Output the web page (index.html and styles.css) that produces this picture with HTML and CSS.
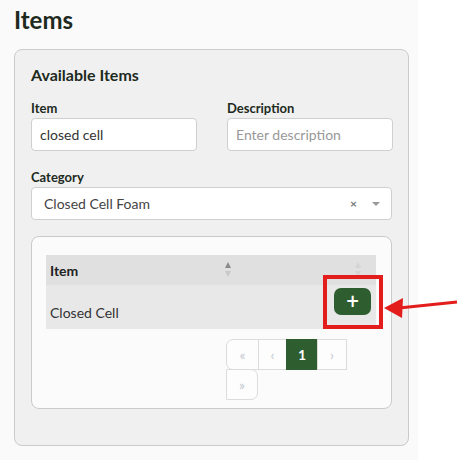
FILE: index.html
```html
<!DOCTYPE html>
<html lang="en">
<head>
<meta charset="utf-8">
<title>Items</title>
<link rel="stylesheet" href="styles.css">
</head>
<body>
<div class="page">
  <h1 class="page-title">Items</h1>

  <section class="card">
    <h2 class="card-title">Available Items</h2>

    <div class="form-row">
      <div class="field">
        <label class="label">Item</label>
        <input class="input" type="text" value="closed cell">
      </div>
      <div class="field">
        <label class="label">Description</label>
        <input class="input" type="text" placeholder="Enter description">
      </div>
    </div>

    <div class="field field-full">
      <label class="label">Category</label>
      <div class="select">
        <span class="select-value">Closed Cell Foam</span>
        <span class="select-clear">×</span>
        <span class="select-caret"></span>
      </div>
    </div>

    <div class="results">
      <table class="table">
        <thead>
          <tr>
            <th class="col-item">Item<span class="sort sort-asc"></span></th>
            <th class="col-action"><span class="sort"></span></th>
          </tr>
        </thead>
        <tbody>
          <tr>
            <td class="col-item">Closed Cell</td>
            <td class="col-action">
              <div class="highlight">
                <button class="btn-add" type="button">+</button>
              </div>
            </td>
          </tr>
        </tbody>
      </table>

      <nav class="pager">
        <span class="pg pg-first">«</span>
        <span class="pg pg-prev">‹</span>
        <span class="pg pg-current">1</span>
        <span class="pg pg-next">›</span>
        <span class="pg pg-last">»</span>
      </nav>
    </div>
  </section>

  <!-- pointer arrow aimed at the add button -->
  <svg class="pointer" width="80" height="30" viewBox="0 0 80 30">
    <line x1="18" y1="17" x2="76" y2="11" stroke="#e31c1c" stroke-width="3"/>
    <polygon points="3,17 22,7 21,27" fill="#e31c1c"/>
  </svg>
</div>
</body>
</html>
```

FILE: styles.css
```css
* { box-sizing: border-box; }

html, body {
  margin: 0;
  background: #ffffff;
}

body {
  font-family: "Lato", "Open Sans", sans-serif;
  color: #222;
}

.page {
  position: relative;
  width: 418px;
  height: 460px;
  background: #fafafa;
  padding: 0 9px 0 14px;
}

.page-title {
  margin: 0;
  padding-top: 4px;
  font-size: 24px;
  line-height: 31px;
  font-weight: 700;
  color: #1d2a1d;
}

.card {
  margin-top: 14px;
  width: 395px;
  background: #f0f0f0;
  border: 1px solid #cbcbcb;
  border-radius: 8px;
  padding: 14px 16px 36px 16px;
}

.card-title {
  margin: 0 0 14px 0;
  font-size: 16px;
  line-height: 22px;
  font-weight: 700;
  color: #1d2a1d;
}

.form-row {
  display: grid;
  grid-template-columns: 166px 166px;
  column-gap: 30px;
}

.field {
  display: flex;
  flex-direction: column;
}

.field-full {
  margin-top: 18px;
}

.label {
  font-size: 13px;
  line-height: 16px;
  font-weight: 700;
  color: #1d2a1d;
  margin-bottom: 2px;
}

.input {
  height: 33px;
  border: 1px solid #cfcfcf;
  border-radius: 4px;
  background: #fff;
  padding: 0 8px;
  font-family: inherit;
  font-size: 14px;
  color: #333;
  outline: none;
}

.input::placeholder {
  color: #999;
}

.select {
  height: 33px;
  border: 1px solid #cfcfcf;
  border-radius: 4px;
  background: #fff;
  display: flex;
  align-items: center;
  padding: 0 11px 0 12px;
  font-size: 14px;
  color: #444;
}

.select-value {
  flex: 1;
}

.select-clear {
  font-size: 12px;
  font-weight: 700;
  color: #777;
  margin-right: 15px;
}

.select-caret {
  width: 0;
  height: 0;
  border-left: 4px solid transparent;
  border-right: 4px solid transparent;
  border-top: 4px solid #999;
}

.results {
  margin-top: 16px;
  background: #fbfbfb;
  border: 1px solid #cbcbcb;
  border-radius: 8px;
  padding: 18px 14px 8px 14px;
}

.table {
  width: 330px;
  border-collapse: collapse;
  font-size: 14px;
}

.table th {
  height: 30px;
  background: #e0e0e1;
  text-align: left;
  font-weight: 700;
  color: #222;
  padding: 0 4px;
  position: relative;
}

.table td {
  height: 44px;
  background: #e8e8e8;
  color: #333;
  padding: 0 4px;
}

.col-item { width: 199px; }

.table td.col-item {
  padding-top: 11px;
}

.table td.col-action {
  padding-right: 5px;
}

/* stacked sort triangles */
.sort {
  position: absolute;
  right: 13px;
  top: 7px;
  width: 7px;
  height: 15px;
}

.col-action .sort { right: 14px; }

.sort::before,
.sort::after {
  content: "";
  position: absolute;
  left: 0;
  border-left: 3.5px solid transparent;
  border-right: 3.5px solid transparent;
}

.sort::before {
  top: 0;
  border-bottom: 6px solid #d4d4d4;
}

.sort::after {
  bottom: 0;
  border-top: 6px solid #d4d4d4;
}

.sort-asc::before { border-bottom-color: #8a8a8a; }
.sort-asc::after { border-top-color: #c8c8c8; }

.highlight {
  position: relative;
  width: 37px;
  margin: 0 0 11px auto;
}

.highlight::after {
  content: "";
  position: absolute;
  left: -11px;
  right: -12px;
  top: -13px;
  bottom: -14px;
  border: 4px solid #e31c1c;
}

.btn-add {
  display: block;
  width: 37px;
  height: 27px;
  border: 0;
  border-radius: 7px;
  background: #2e5e2f;
  color: #fff;
  font-family: "DejaVu Sans", sans-serif;
  font-weight: 700;
  font-size: 17px;
  line-height: 27px;
  padding: 0;
}

.pager {
  margin: 10px 0 0 180px;
  width: 150px;
  display: flex;
  flex-wrap: wrap;
}

.pg {
  height: 31px;
  display: flex;
  align-items: center;
  justify-content: center;
  border: 1px solid #dcdcdc;
  margin-left: -1px;
  background: #fdfdfd;
  color: #c4c8d0;
  font-size: 14px;
}

.pg-first {
  width: 33px;
  margin-left: 0;
  border-radius: 7px 0 0 7px;
}

.pg-prev { width: 29px; }

.pg-current {
  width: 32px;
  background: #2e5e2f;
  border-color: #2e5e2f;
  color: #fff;
  font-weight: 700;
}

.pg-next { width: 30px; }

.pg-last {
  width: 32px;
  margin-left: 0;
  margin-top: -1px;
  border-radius: 0 7px 7px 0;
}

.pointer {
  position: absolute;
  left: 381px;
  top: 291px;
}
```
